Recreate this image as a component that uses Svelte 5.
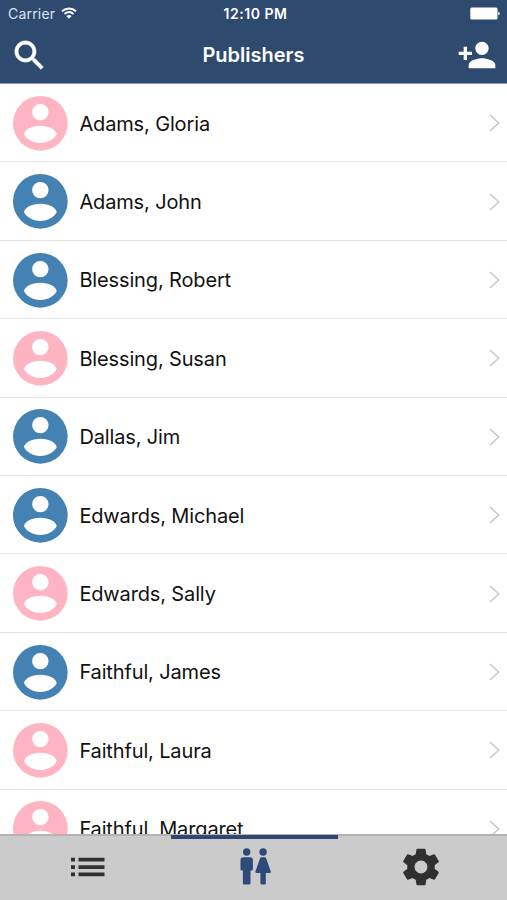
<script lang="ts">
    type Publisher = { name: string; gender: 'male' | 'female' };

    const publishers: Publisher[] = [
        { name: 'Adams, Gloria', gender: 'female' },
        { name: 'Adams, John', gender: 'male' },
        { name: 'Blessing, Robert', gender: 'male' },
        { name: 'Blessing, Susan', gender: 'female' },
        { name: 'Dallas, Jim', gender: 'male' },
        { name: 'Edwards, Michael', gender: 'male' },
        { name: 'Edwards, Sally', gender: 'female' },
        { name: 'Faithful, James', gender: 'male' },
        { name: 'Faithful, Laura', gender: 'female' },
        { name: 'Faithful, Margaret', gender: 'female' }
    ];

    let activeTab = $state('publishers');
</script>

<div class="screen">
    <header>
        <div class="status">
            <div class="carrier">
                <span>Carrier</span>
                <svg class="wifi" viewBox="0 0 16 12">
                    <path d="M1 4.3C5 .6 11 .6 15 4.3M3.5 7c2.7-2.4 6.3-2.4 9 0" />
                    <path class="dot" d="M8 11.7 5.4 9c1.5-1.3 3.7-1.3 5.2 0z" />
                </svg>
            </div>
            <span class="time">12:10 PM</span>
            <svg class="battery" viewBox="0 0 30 13">
                <rect x="0.3" y="0.5" width="27.2" height="12" rx="1.5" />
                <path d="M28.3 4.7c2 .5 2 3.1 0 3.6z" />
            </svg>
        </div>
        <div class="nav">
            <button class="search" aria-label="Search">
                <svg viewBox="0 0 24 24">
                    <path d="M15.5 14h-.79l-.28-.27C15.41 12.59 16 11.11 16 9.5 16 5.91 13.09 3 9.5 3S3 5.91 3 9.5 5.91 16 9.5 16c1.61 0 3.09-.59 4.23-1.57l.27.28v.79l5 4.99L20.49 19l-4.99-5zm-6 0C7.01 14 5 11.99 5 9.5S7.01 5 9.5 5 14 7.01 14 9.5 11.99 14 9.5 14z" />
                </svg>
            </button>
            <h1>Publishers</h1>
            <button class="add" aria-label="Add publisher">
                <svg viewBox="0 0 24 24">
                    <path d="M15 12c2.21 0 4-1.79 4-4s-1.79-4-4-4-4 1.79-4 4 1.79 4 4 4zm-9-2V7H4v3H1v2h3v3h2v-3h3v-2H6zm9 4c-2.67 0-8 1.34-8 4v2h16v-2c0-2.66-5.33-4-8-4z" />
                </svg>
            </button>
        </div>
    </header>

    <main>
        {#each publishers as { name, gender }}
            <div class="row">
                <svg class="avatar {gender}" viewBox="2 2 20 20">
                    <circle cx="12" cy="12" r="10" />
                    <path class="person" d="M12 4.9a3 3 0 1 1 0 6 3 3 0 0 1 0-6zM6 15.9c.3-1.5 2.7-3 6-3s5.700 1.500 6 3c-.8 1.800-3.300 3.300-6 3.300s-5.200-1.500-6-3.300z" />
                </svg>
                <span class="name">{name}</span>
                <svg class="chevron" viewBox="0 0 11 18">
                    <path d="M1 1l8.7 8L1 17" />
                </svg>
            </div>
        {/each}
    </main>

    <nav class="tabs">
        <button class:active={activeTab === 'list'} aria-label="List" onclick={() => activeTab = 'list'}>
            <svg class="list" viewBox="0 0 34 20">
                <path d="M0 .8h4v3.7H0zM7.5.8H33.5v3.7H7.5zM0 8.2h4v3.7H0zM7.5 8.2H33.5v3.7H7.5zM0 15.6h4v3.7H0zM7.5 15.6H33.5v3.7H7.5z" />
            </svg>
        </button>
        <button class:active={activeTab === 'publishers'} aria-label="Publishers" onclick={() => activeTab = 'publishers'}>
            <svg class="people" viewBox="0 0 32 38">
                <circle cx="6.700" cy="4" r="3.700" />
                <path d="M3.300 9.300h6.800a2.800 2.800 0 0 1 2.800 2.800v9.100q0 1.400-1.400 1.400h-1v12.600q0 1.400-1.400 1.400H4.300q-1.400 0-1.400-1.400V22.600h-1q-1.400 0-1.400-1.400v-9.100a2.800 2.800 0 0 1 2.800-2.800z" />
                <circle cx="23.100" cy="4" r="3.700" />
                <path d="M21.600 9.300h3q1.200 0 1.700 1.400l4.500 12.900q.4 1.400-1 1.400h-4v10.200q0 1.400-1.400 1.400h-2.600q-1.400 0-1.400-1.400V25h-4q-1.400 0-1-1.400l4.500-12.900q.5-1.400 1.700-1.400z" />
            </svg>
        </button>
        <button class:active={activeTab === 'settings'} aria-label="Settings" onclick={() => activeTab = 'settings'}>
            <svg class="gear" viewBox="0 0 24 24">
                <path d="M19.43 12.98c.04-.32.07-.64.07-.98s-.03-.66-.07-.98l2.11-1.65c.19-.15.24-.42.12-.64l-2-3.46c-.12-.22-.39-.3-.61-.22l-2.49 1c-.52-.4-1.08-.73-1.69-.98l-.38-2.65C14.46 2.18 14.25 2 14 2h-4c-.25 0-.46.18-.49.42l-.38 2.65c-.61.25-1.17.59-1.69.98l-2.49-1c-.23-.09-.49 0-.61.22l-2 3.46c-.13.22-.07.49.12.64l2.11 1.65c-.04.32-.07.65-.07.98s.03.66.07.98l-2.11 1.65c-.19.15-.24.42-.12.64l2 3.46c.12.22.39.3.61.22l2.49-1c.52.4 1.08.73 1.69.98l.38 2.65c.03.24.24.42.49.42h4c.25 0 .46-.18.49-.42l.38-2.65c.61-.25 1.17-.59 1.69-.98l2.49 1c.23.09.49 0 .61-.22l2-3.46c.12-.22.07-.49-.12-.64l-2.11-1.65zM12 15.5c-1.93 0-3.5-1.57-3.5-3.5s1.57-3.5 3.5-3.5 3.5 1.57 3.5 3.5-1.57 3.5-3.5 3.5z" />
            </svg>
        </button>
    </nav>
</div>

<style>
    :global(body) {
        margin: 0;
    }

    .screen {
        display: flex;
        flex-direction: column;
        width: 100%;
        height: 100vh;
        overflow: hidden;
        background: #fff;
        color: #111;
        font-family: Inter, "Liberation Sans", sans-serif;
    }

    svg {
        display: block;
        flex: none;
    }

    button {
        display: flex;
        padding: 0;
        border: 0;
        background: none;
        color: inherit;
    }

    header {
        flex: none;
        box-sizing: border-box;
        height: 84px;
        border-bottom: 1px solid #8799b1;
        background: #2f4a6f;
        color: #fff;
    }

    .status {
        display: grid;
        grid-template-columns: 1fr auto 1fr;
        align-items: center;
        height: 27px;
        padding: 0 8px;
        font-size: 14px;
        line-height: 27px;
    }

    .carrier {
        display: flex;
        align-items: center;
        gap: 6px;
        color: #dce5f0;
        letter-spacing: 0.2px;
    }

    .wifi {
        width: 16px;
        height: 12px;
        margin-top: -2px;
        fill: none;
        stroke: #fff;
        stroke-width: 1.9;
    }

    .wifi .dot {
        fill: #fff;
        stroke: none;
    }

    .time {
        padding-left: 4px;
        font-weight: 600;
        font-size: 14px;
        letter-spacing: 0.55px;
    }

    .battery {
        justify-self: end;
        width: 30px;
        height: 13px;
        margin-right: -1px;
        fill: #fff;
    }

    .nav {
        display: grid;
        grid-template-columns: 1fr auto 1fr;
        align-items: center;
        height: 56px;
        padding: 0 10px;
    }

    h1 {
        margin: 0;
        font-size: 20px;
        font-weight: 600;
    }

    .nav svg {
        fill: currentColor;
    }

    .search svg {
        width: 39px;
        height: 39px;
        stroke: currentColor;
        stroke-width: 0.4;
    }

    .add {
        justify-self: end;
    }

    .add svg {
        width: 40px;
        height: 40px;
        margin-top: -1px;
    }

    main {
        flex: 1;
        min-height: 0;
        overflow: hidden;
    }

    .row {
        display: flex;
        align-items: center;
        box-sizing: border-box;
        height: 78.4px;
        padding: 1px 7px 0 12.7px;
        border-bottom: 1px solid #e4e4e4;
    }

    .avatar {
        width: 54.7px;
        height: 54.7px;
        overflow: visible;
    }

    .avatar.male {
        fill: #4482b4;
    }

    .avatar.female {
        fill: #ffb5c1;
    }

    .person {
        fill: #fff;
    }

    .name {
        flex: 1;
        padding-left: 12px;
        padding-top: 1px;
        font-size: 20px;
        letter-spacing: -0.14px;
    }

    .chevron {
        width: 11px;
        height: 18px;
        fill: none;
        stroke: #c7c7cc;
        stroke-width: 1.5;
    }

    .tabs {
        flex: none;
        display: grid;
        grid-template-columns: 171px 167px 1fr;
        box-sizing: border-box;
        height: 66px;
        border-top: 2px solid #b3b3b3;
        background: #cbcbcb;
    }

    .tabs button {
        align-items: center;
        justify-content: center;
        box-sizing: border-box;
        height: 65px;
        margin-top: -1px;
        border-top: 4px solid transparent;
        padding-bottom: 5px;
        color: #303030;
    }

    .tabs button.active {
        border-top-color: #2d4770;
        color: #2d4a7a;
    }

    .tabs svg {
        fill: currentColor;
    }

    .list {
        width: 34px;
        height: 20px;
        margin-left: 4px;
    }

    .people {
        width: 32px;
        height: 38px;
        margin-left: 2px;
    }

    .gear {
        width: 44px;
        height: 44px;
        margin-right: 3px;
    }
</style>
